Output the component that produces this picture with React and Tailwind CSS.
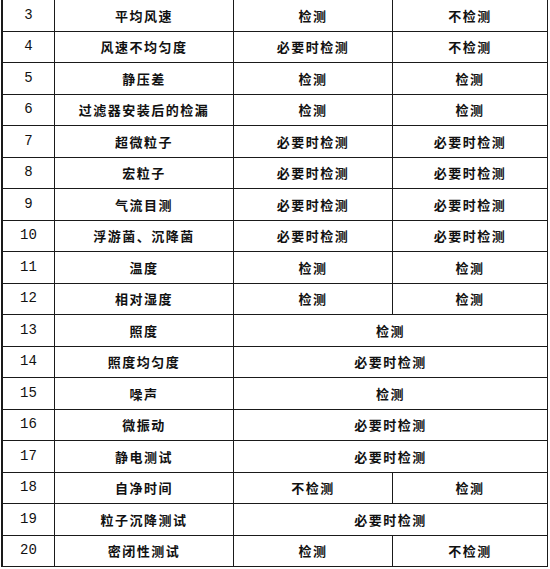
import React from "react";

const rows = [
  ["3", "平均风速", "检测", "不检测"],
  ["4", "风速不均匀度", "必要时检测", "不检测"],
  ["5", "静压差", "检测", "检测"],
  ["6", "过滤器安装后的检漏", "检测", "检测"],
  ["7", "超微粒子", "必要时检测", "必要时检测"],
  ["8", "宏粒子", "必要时检测", "必要时检测"],
  ["9", "气流目测", "必要时检测", "必要时检测"],
  ["10", "浮游菌、沉降菌", "必要时检测", "必要时检测"],
  ["11", "温度", "检测", "检测"],
  ["12", "相对湿度", "检测", "检测"],
  ["13", "照度", "检测"],
  ["14", "照度均匀度", "必要时检测"],
  ["15", "噪声", "检测"],
  ["16", "微振动", "必要时检测"],
  ["17", "静电测试", "必要时检测"],
  ["18", "自净时间", "不检测", "检测"],
  ["19", "粒子沉降测试", "必要时检测"],
  ["20", "密闭性测试", "检测", "不检测"],
];

const cell =
  "flex items-center justify-center border-r border-b border-[#1a1a1a] text-[13px] tracking-[1.5px] text-[#111]";

export default function App() {
  return (
    <div className="w-[550px] h-[569px] bg-white overflow-hidden">
      <div
        className="ml-[1px] w-[547px] grid grid-cols-[52px_179px_159px_155px] auto-rows-[31.5px] border-l-2 border-[#1a1a1a]"
        style={{ fontFamily: '"Noto Sans CJK SC", "Liberation Sans", sans-serif', fontWeight: 600 }}
      >
        {rows.map((r) => (
          <React.Fragment key={r[0]}>
            <div
              className={cell + " tracking-normal !text-[14px]"}
              style={{ fontFamily: '"Liberation Mono", "DejaVu Sans Mono", monospace', fontWeight: 400 }}
            >
              {r[0]}
            </div>
            <div className={cell}>{r[1]}</div>
            {r.length === 4 ? (
              <>
                <div className={cell}>{r[2]}</div>
                <div className={cell}>{r[3]}</div>
              </>
            ) : (
              <div className={cell + " col-span-2"}>{r[2]}</div>
            )}
          </React.Fragment>
        ))}
      </div>
    </div>
  );
}
